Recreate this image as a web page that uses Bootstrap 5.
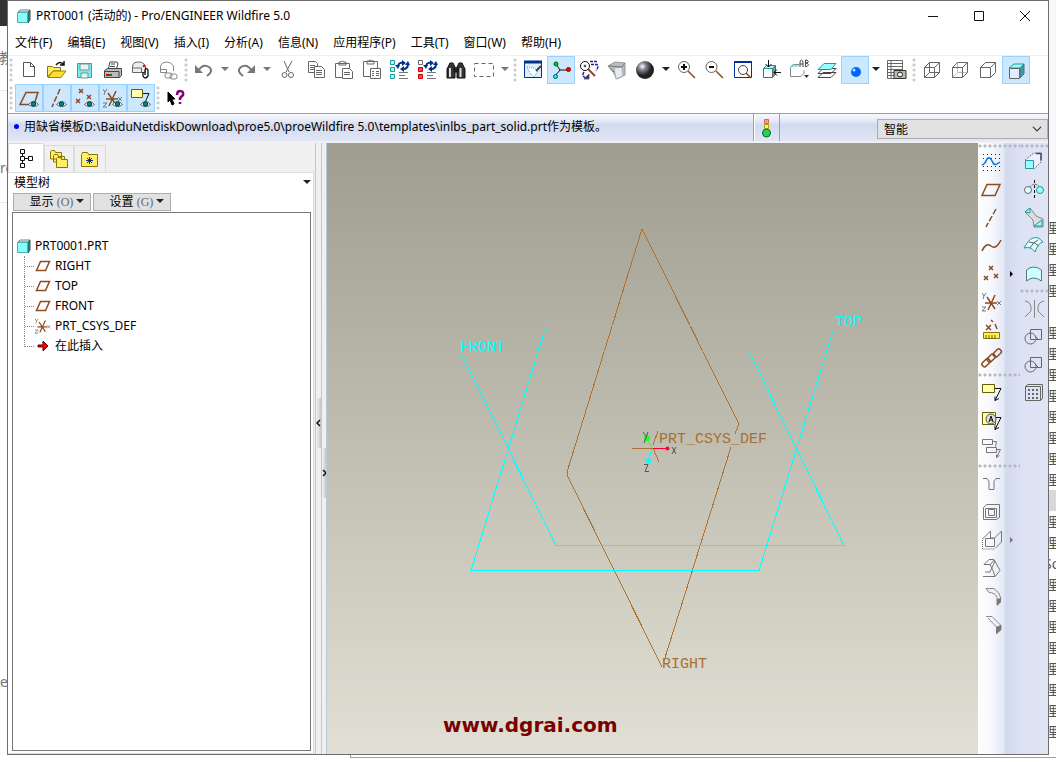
<!DOCTYPE html>
<html lang="zh-CN">
<head>
<meta charset="utf-8">
<meta name="viewport" content="width=device-width, initial-scale=1">
<title>PRT0001 (活动的) - Pro/ENGINEER Wildfire 5.0</title>
<link href="https://cdn.jsdelivr.net/npm/bootstrap@5.3.0/dist/css/bootstrap.min.css" rel="stylesheet">
<style>
body{font:12px/20px "Noto Sans","Noto Sans CJK SC",sans-serif;color:#000;background:#fff}
button{border:0;padding:0;background:none;color:#000}
svg{display:block;overflow:visible;fill:none;stroke:#666}
.edge{width:7px;flex:none;overflow:hidden;font-size:14px;color:#777;background:#fdfdfd}
.edge .cap-dark{height:26px;background:#333}
.edge .sep{border-top:1px solid #e8e8e8}
.edge-r{color:#555;font-size:14px;line-height:21px}
.edge-r .rows div{height:21px;text-indent:-5px;white-space:nowrap}
.under{height:7px;padding-left:350px}
.under div{height:3px;border:1px solid #a0a0a0;border-width:0 0 1px 1px}
.app{border:1px solid #6d6d6d;background:#fff;min-width:0}
.titlebar{height:29px;padding-left:8px}
.titlebar .win{width:46px;height:28px}
.menubar{height:26px;border-bottom:1px solid #f0f0f0}
.menubar a{color:#000;text-decoration:none;padding:0 8px 0 7px;white-space:nowrap}
.tbar{height:28px}
.grip{width:7px;flex:none;margin:2px 0;background:radial-gradient(circle at 3px 2px,#ccc 1px,transparent 2px) 0 0/7px 5px repeat-y}
.tool{width:28px;height:28px;flex:none;display:flex;align-items:center;justify-content:center}
.tool svg{width:20px;height:20px}
.tool.on{background:#cce8ff;border:1px solid #99d1ff}
.drop{width:14px;flex:none}
.drop::after,.tri::after{content:"";display:inline-block;border:4px solid transparent;border-top-color:#222;border-bottom:0;vertical-align:3px}
.drop.off::after{border-top-color:#777}
.msg{height:28px;border-top:1px solid #a09f97;margin-top:1px;background:linear-gradient(#f7f8fd,#e6eaf6 25%,#d2daee 40%,#e2e6f6);flex:none}
.msg .line{padding:0 0 2px 6px}
.msg .lamp{width:27px;border:1px solid #a0a0a0;border-width:0 1px;box-shadow:inset 1px 0 #fff}
.dot{width:5px;height:5px;border-radius:50%;background:#00f;margin-right:5px}
.form-select.filter{width:171px;height:20px;margin:5px 0 0 97px;padding:0 6px;border:1px solid #adadad;border-radius:0;background-color:#e1e1e1;font-size:12px;line-height:17px;color:#000;background-size:10px 10px;background-position:right 5px center}
.main{background:#f0f0f0;padding-top:2px}
.side{width:307px;flex:none;padding-right:1px}
.tabs{height:29px;align-items:flex-end}
.tabs button{height:27px;border:1px solid #dcdcdc;border-bottom:0;display:flex;align-items:center;justify-content:center}
.tabs button:first-child{width:36px;height:30px;background:#fff;margin-bottom:-1px}
.tabs svg{width:20px;height:20px}
.pane{background:#fff;border:1px solid #dcdcdc;border-left:0;padding:0 2px 2px 4px}
.pane .btn-set{height:18px;width:78px;border:1px solid #adadad;background:#e1e1e1;line-height:16px;padding-left:10px}
.pane .cap{padding-left:2px}
.pane .set-row{gap:2px;padding-left:1px}
.btn-set span{font-family:"Liberation Serif",serif;color:#667}
.tree{border:1px solid #777;padding:23px 0 0 4px;margin-top:1px}
.tree ul{list-style:none;margin:0;padding-left:7px}
.tree li{display:flex;align-items:center;height:20px}
.tree ul li::before{content:"";width:11px;height:20px;border-left:1px dotted #888;background:repeating-linear-gradient(90deg,#888 0 1px,transparent 1px 2px) 0 10px/12px 1px no-repeat}
.tree ul li:last-child::before{height:11px;align-self:flex-start}
.tree li svg{width:16px;height:16px;margin-right:4px}
.split{width:6px;border-left:1px solid #b9c9d8;flex:none}
.split.slim{width:5px}
.split button{height:50px;background:linear-gradient(90deg,#f4f4f4,#c8c8c8);font-size:0}
.split svg{width:5px;height:8px}
.view{background:linear-gradient(#9f9d90,#e2e0d4);min-width:0;border-left:1px solid #b9c9d8}
.view svg{width:100%;height:100%;stroke-width:1}
.view .geo{shape-rendering:crispEdges}
.view text{stroke:none;font:15px "Liberation Mono",monospace}
.view .site{font:bold 20px "DejaVu Sans",sans-serif;fill:#7a0000}
.feat{width:70px;flex:none;background:linear-gradient(90deg,#fff,#f5f7fc 20%,#e5e9f6 36%,#d1d9ec 40%,#dce2f3 60%,#e0e5f5)}
.hgrip{height:7px;background:radial-gradient(circle at 2px 3px,#b8b8c0 1px,transparent 2px) 0 0/5px 7px repeat-x}
.hgrip.top{height:5px}
.fly{position:relative}
.fly::after{content:"";position:absolute;left:32px;border:3px solid transparent;border-left-color:#000;border-right:0}
.fly.off::after{border-left-color:#777}
.k{stroke:#111}.b{stroke:#8a4b20;stroke-width:1.500}.t{stroke:#299;fill:#9ff}.y{stroke:#666000;fill:#ffffb0}.yf{stroke:#887700;fill:#fe6}.n{stroke:#039}.f{fill:#777;stroke:none}.e{stroke:#444;fill:#fff}.w{fill:#fff}
</style>
<script src="https://cdn.jsdelivr.net/npm/bootstrap@5.3.0/dist/js/bootstrap.bundle.min.js"></script>
</head>
<body class="vh-100 d-flex flex-column overflow-hidden">
<svg width="0" height="0" class="position-absolute" aria-hidden="true">
<symbol id="eye" viewBox="0 0 20 20"><path class="e" d="M9.500 16.500q5-6 10 0q-5 4-10 0z" stroke-width=".8"/><circle cx="14.500" cy="16" r="2.200" fill="#088" stroke="#044"/></symbol>
<symbol id="plane" viewBox="0 0 16 16"><path d="M5.500 3.500h9l-4 9h-9z" stroke="#8a4b20" stroke-width="1.500"/></symbol>
<symbol id="csys" viewBox="0 0 20 20"><path d="M3 11h12M5 5l8 12M13 3L6 18" stroke="#8a4b20" stroke-width="1.500"/><path d="M0 1l2 3 2-3M2 4l-1 3M15 9l4 4m0-4l-4 4M0 15h4l-4 4h4" stroke="#777"/></symbol>
<symbol id="cube" viewBox="0 0 16 16"><path d="M2 4l2-2h10l-2 2z" fill="#dff" stroke="#688"/><path d="M12 4l2-2v10l-2 3z" fill="#299" stroke="#355"/><path d="M1.500 4.500h10v10h-10z" fill="#8ff" stroke="#5aa"/></symbol>
<symbol id="swap" viewBox="0 0 20 20"><path d="M8 6q1-4 5-3M18 4q0 5-5 5" stroke="#038" stroke-width="2"/><path d="M12 0l4 3-4 3zM14 6l-4 3 4 3zM5 5h5L8 9zM15 5h5l-2-4z" fill="#038" stroke="none"/><path d="M9 12.500h9M9 15.500h6M9 18.500h9" stroke="#777"/></symbol>
<symbol id="circs" viewBox="0 0 20 20"><path d="M6.500 2.500h11v10h-11z"/><circle cx="6.500" cy="11.500" r="5.500"/><path d="M11 9l3 3"/></symbol>
</svg>
<div class="d-flex flex-grow-1 overflow-hidden">
<div class="edge"><div class="cap-dark"></div><div style="height:64px;padding-top:22px;text-indent:-1px">教</div><div class="sep"></div><div style="height:67px"></div><div>rc</div><div class="sep mt-4"></div><div style="height:469px"></div><div>e</div></div>

<div class="app d-flex flex-column flex-grow-1">
<header class="titlebar d-flex align-items-center flex-shrink-0">
<svg width="16" height="16"><use href="#cube"/></svg><span class="ms-1 flex-grow-1">PRT0001 (活动的) - Pro/ENGINEER Wildfire 5.0</span>
<button class="win" aria-label="最小化"><svg width="46" height="28" class="k"><path d="M18 14.500h10"/></svg></button>
<button class="win" aria-label="最大化"><svg width="46" height="28" class="k"><path d="M18.500 9.500h9v9h-9z"/></svg></button>
<button class="win" aria-label="关闭"><svg width="46" height="28" class="k"><path d="M18 9l10 10M28 9L18 19"/></svg></button>
</header>
<nav class="menubar d-flex align-items-center flex-shrink-0"><a href="#">文件(F)</a><a href="#">编辑(E)</a><a href="#">视图(V)</a><a href="#">插入(I)</a><a href="#">分析(A)</a><a href="#">信息(N)</a><a href="#">应用程序(P)</a><a href="#">工具(T)</a><a href="#">窗口(W)</a><a href="#">帮助(H)</a></nav>

<div class="tbar d-flex flex-shrink-0">
<span class="grip"></span>
<button class="tool" aria-label="新建"><svg viewBox="0 0 20 20"><path d="M4.500 2.500h7l4 4v10h-11zM11.500 2.500v4h4" stroke="#555"/></svg></button>
<button class="tool" aria-label="打开"><svg viewBox="0 0 20 20"><path class="yf" d="M.5 17V6.500h5l1 1h7V11H6z"/><path d="M1 17.500l5-6.500h13l-5 6.500z" fill="#fd3" stroke="#880"/><path class="k" d="M9 5q4-5 8 0M17 1v4h-4" stroke-width="1.500"/></svg></button>
<button class="tool" aria-label="保存"><svg viewBox="0 0 20 20"><path d="M2.500 3.500h14v14h-14z" fill="#7ee" stroke="#499"/><path d="M5 4h9v6H5zM6 13h7v5H6z" fill="#eee" stroke="#699"/></svg></button>
<button class="tool" aria-label="打印"><svg viewBox="0 0 20 20"><path class="e" d="M5 10l2-8h7l1 2-2 6z"/><path d="M8 4h4M7 6.500h5" stroke="#444"/><path d="M1.500 10.500l3-2h14v7l-2 2h-15z" fill="#bbb" stroke="#444"/><path d="M2 11.500h14v6" stroke="#444"/><path d="M3 15h3" stroke="#d00" stroke-width="2"/><path d="M6 15h3" stroke="#080" stroke-width="2"/></svg></button>
<button class="tool" aria-label="发送"><svg viewBox="0 0 20 20"><path d="M1.500 12.500V7q0-5 6-5t7 5v5.500zM1.500 8h9v4" fill="#eee"/><circle cx="13" cy="6" r="1" fill="red" stroke="red"/><path class="k" d="M12 12v4q2 4 5 0v-6q-2-3-3 0v5" stroke-width="1.300"/></svg></button>
<button class="tool" aria-label="链接"><svg viewBox="0 0 20 20"><path d="M1.500 12.500V6q1-4 6-4t7 4v5M1.500 9.500h6V13M1.500 12.500h6" stroke="#888"/><rect x="6" y="13" width="7" height="5" rx="2" stroke="#888"/><rect x="11" y="14" width="7" height="5" rx="2" stroke="#888"/></svg></button>
<span class="grip"></span>
<button class="tool" aria-label="撤消"><svg viewBox="0 0 20 20"><path d="M4 11q5-8 11-4 5 4-2 9" stroke="#777" stroke-width="2"/><path class="f" d="M1 5v8h8z"/></svg></button><button class="drop off" aria-label="撤消列表"></button>
<button class="tool" aria-label="重做"><svg viewBox="0 0 20 20"><path d="M16 11Q11 3 5 7q-5 4 2 9" stroke="#777" stroke-width="2"/><path class="f" d="M19 5v8h-8z"/></svg></button><button class="drop off" aria-label="重做列表"></button>
<button class="tool" aria-label="剪切"><svg viewBox="0 0 20 20"><path d="M6 1l5 11M14 1L8 12"/><circle cx="6.500" cy="15" r="2.500"/><circle cx="13" cy="15" r="2.500"/></svg></button>
<button class="tool" aria-label="复制"><svg viewBox="0 0 20 20" stroke="#777"><path class="w" d="M2.500 1.500h7l2 2v9h-9zM4 5.500h5m-5 2h5m-5 2h5"/><path class="w" d="M8.500 6.500h7l3 3v8h-10zM10 10.500h6m-6 2h6m-6 2h6"/></svg></button>
<button class="tool" aria-label="粘贴"><svg viewBox="0 0 20 20"><path d="M1.500 3.500h14v14h-14zM5 5V2h2q1-2 3 0h2v3z"/><path class="w" d="M8.500 8.500h7l3 3v7h-10zM10 12.500h6m-6 2h6"/></svg></button>
<button class="tool" aria-label="选择性粘贴"><svg viewBox="0 0 20 20"><path d="M1.500 1.500h14v15h-14zM5 4V1h2q1-2 3 0h2v3z"/><path class="w" d="M8.500 8.500h10v10h-10zM10 11.500h2m2 0h3m-7 2h2m2 0h3m-7 2h2m2 0h3"/></svg></button>
<button class="tool" aria-label="再生"><svg viewBox="0 0 20 20"><path class="t" d="M.5.5h4v4h-4zM.5 7.500h4v4h-4zM.5 14.500h4v4h-4z"/><use href="#swap"/></svg></button>
<button class="tool" aria-label="再生管理器"><svg viewBox="0 0 20 20"><path d="M.5.5h4v4h-4z"/><path d="M.5 7.500h4v4h-4zM.5 14.500h4v4h-4z" fill="#f44" stroke="#c00"/><use href="#swap"/></svg></button>
<button class="tool" aria-label="查找"><svg viewBox="0 0 20 20"><path d="M4 3h3l2 4v11H1V9zM13 3h3l3 6v9h-8V7zM8 8h4v4H8z" fill="#333" stroke="#111"/><path d="M4 8v9M14.500 8v9" stroke="#ddd" stroke-width="2"/></svg></button>
<button class="tool" aria-label="选取框"><svg viewBox="0 0 20 20"><path d="M.5 3.500h19v13H.5z" stroke-dasharray="4 3"/></svg></button><button class="drop off" aria-label="选取列表"></button>
<span class="grip"></span>
<button class="tool" aria-label="重画"><svg viewBox="0 0 20 20"><path d="M1.500 1.500h17v16h-17z" fill="#def" stroke="#038"/><path d="M1 2h18" stroke="#038" stroke-width="3"/><path d="M4 7l7 1 4 3-4 6-4-4z" fill="#fff" stroke="#3ad" stroke-dasharray="1 1"/><path d="M18 6l-5 5" stroke="#444" stroke-width="2"/></svg></button>
<button class="tool on" aria-label="旋转中心"><svg viewBox="0 0 20 20"><path class="k" d="M5 4l4 6h8M9 10l-5 6"/><circle cx="5" cy="4" r="2" fill="#0c3" stroke="#060"/><circle cx="17.500" cy="9.500" r="2" fill="red" stroke="#800"/><circle cx="4.500" cy="16.500" r="2" fill="#3ee" stroke="#055"/></svg></button>
<button class="tool" aria-label="定向模式"><svg viewBox="0 0 20 20"><circle class="k" cx="6" cy="6" r="4.500"/><circle cx="6" cy="6" r="1" fill="#000"/><path d="M9 9l7 7" stroke="#8a4b20" stroke-width="2"/><path d="M11 1.500h7M12 4.500h6q2 3-1 6M5 12q-3 4 2 6" stroke="#229" stroke-dasharray="3 1" stroke-width="1.500"/><path d="M5 19h5v-5z" fill="#229"/></svg></button>
<button class="tool" aria-label="外观"><svg viewBox="0 0 20 20"><path d="M1 6l7-4 10 1v12l-8 4-4-7z" fill="#bbb" stroke="#999"/><path d="M7 8l8-1 1 9-7 3z" fill="#e4eaf4" stroke="#aaa"/><path d="M1 6l14 1 3-4M3 8l4 4" stroke="#777"/></svg></button>
<button class="tool" aria-label="外观库"><svg viewBox="0 0 20 20"><defs><radialGradient id="ball" cx=".35" cy=".3"><stop stop-color="#fff"/><stop offset=".4" stop-color="#889"/><stop offset="1" stop-color="#222"/></radialGradient></defs><circle cx="10" cy="10" r="9" fill="url(#ball)" stroke="none"/></svg></button><button class="drop" aria-label="外观列表"></button>
<button class="tool" aria-label="放大"><svg viewBox="0 0 20 20"><circle cx="7" cy="7" r="5.500"/><path class="k" d="M4 7h6M7 4v6" stroke-width="2"/><path class="b" d="M11 11l7 7" stroke-width="2"/></svg></button>
<button class="tool" aria-label="缩小"><svg viewBox="0 0 20 20"><circle cx="6.500" cy="7" r="5.500"/><path class="k" d="M4 7h5" stroke-width="2"/><path class="b" d="M11 11l7 7"/></svg></button>
<button class="tool" aria-label="重新调整"><svg viewBox="0 0 20 20"><path class="n" d="M1.500 1.500h17v16h-17z"/><path class="n" d="M1 2h18" stroke-width="2"/><circle cx="10" cy="10" r="4.500" stroke="#444"/><path class="b" d="M13 13l5 5"/></svg></button>
<button class="tool" aria-label="重定向"><svg viewBox="0 0 20 20"><path d="M2.500 8.500h9v9h-9z" fill="#f4ffff"/><path class="t" d="M2.500 8.500l3-3h9l-3 3z"/><path d="M11.500 8.500l3-3v9l-3 3z" fill="#4aa"/><path class="k" d="M7.500 0v7m-3-3l3 3 3-3M20 12.500h-7m3-3l-3 3 3 3"/></svg></button>
<button class="tool" aria-label="视图列表"><svg viewBox="0 0 20 20"><path d="M1 7l3-3h7l-2 3z" fill="#8ee" stroke="none"/><path d="M1.500 16.500v-9l3-3H10M1.500 16.500H12l3-3v-3" stroke="#888"/><path d="M11 7V2q1.500-4 3 0v5m-3-3h3M16.500 6.500V0H18q3 2 0 3h-1.500H18q3 2 0 3.500z" stroke="#444"/><path d="M15 15h5l-2.500 3z" fill="#333" stroke="none"/></svg></button>
<button class="tool" aria-label="图层"><svg viewBox="0 0 20 20"><path class="e" d="M1 17.500l5-5h13l-5 5zM1 13.500l5-5h13l-5 5z"/><path class="t" d="M1 9.500l6-6h12l-5 6z" stroke="#444"/></svg></button>
<button class="tool on" aria-label="视图管理器"><svg viewBox="0 0 20 20"><circle cx="11" cy="12" r="5" fill="#06f" stroke="none"/><circle cx="9" cy="10" r="1.500" fill="#bdf" stroke="none"/></svg></button><button class="drop" aria-label="显示列表"></button>
<button class="tool" aria-label="快照"><svg viewBox="0 0 20 20"><path d="M.5.5h15v18H.5zM.5 3.500h15m-15 3h15m-15 3h15m-15 3h15m-15 3h15M4 1v18"/><path d="M7 10.500h12v8H7z" fill="#bba" stroke="#333"/><circle cx="13" cy="14.500" r="2.500" fill="#eee" stroke="#222"/></svg></button>
<span class="grip"></span>
<button class="tool" aria-label="线框"><svg viewBox="0 0 20 20"><path d="M2.500 7.500l5-5h10v10l-5 5h-10zM2.500 7.500h10v10m0-10l5-5M7.500 2.500v10h10m-10 0l-5 5"/></svg></button>
<button class="tool" aria-label="隐藏线"><svg viewBox="0 0 20 20"><path d="M7.500 2.500v10h10m-10 0l-5 5" stroke="#bbb"/><path d="M2.500 7.500l5-5h10v10l-5 5h-10zM2.500 7.500h10v10m0-10l5-5"/></svg></button>
<button class="tool" aria-label="无隐藏线"><svg viewBox="0 0 20 20"><path d="M2.500 7.500l5-5h10v10l-5 5h-10zM2.500 7.500h10v10m0-10l5-5"/></svg></button>
<button class="tool on" aria-label="着色"><svg viewBox="0 0 20 20"><path class="t" d="M3 8l5-4h10l-4 4z"/><path d="M14 8l4-4v10l-4 4z" fill="#3a9fa6"/><path d="M3.500 8.500h10v10h-10z" fill="#def"/></svg></button>
</div>
<div class="tbar d-flex flex-shrink-0">
<span class="grip"></span>
<button class="tool on" aria-label="基准平面显示"><svg viewBox="0 0 20 20"><path class="b" d="M7 4.500h12l-4 12H1z"/><use href="#eye"/></svg></button>
<button class="tool on" aria-label="基准轴显示"><svg viewBox="0 0 20 20"><path class="b" d="M13 1L5 19" stroke-dasharray="6 2"/><use href="#eye"/></svg></button>
<button class="tool on" aria-label="基准点显示"><svg viewBox="0 0 20 20"><path class="b" d="M4 1l4 4m0-4L4 5M12 7l4 4m0-4l-4 4M1 11l4 4m0-4l-4 4"/><use href="#eye"/></svg></button>
<button class="tool on" aria-label="坐标系显示"><svg viewBox="0 0 20 20"><use href="#csys"/><use href="#eye"/></svg></button>
<button class="tool on" aria-label="注释显示"><svg viewBox="0 0 20 20"><path class="y" d="M.5 1.500h11v8H.5z"/><path class="k" d="M12 5.500h6l-4 9"/><use href="#eye"/></svg></button>
<span class="grip"></span>
<button class="tool" aria-label="上下文帮助"><svg viewBox="0 0 20 20"><path d="M2 4v10l2-2 2 5 2-1-2-5h3z" fill="#000" stroke="#000"/><path d="M11 7q0-4 3-4 4 0 3 4l-3 3v2m0 2v2" stroke="#807" stroke-width="2.500"/></svg></button>
</div>

<div class="msg d-flex">
<div class="line d-flex flex-grow-1 align-items-center text-nowrap"><span class="dot"></span><span>用缺省模板D:\BaiduNetdiskDownload\proe5.0\proeWildfire 5.0\templates\inlbs_part_solid.prt作为模板。</span></div>
<div class="lamp d-flex align-items-center justify-content-center"><svg width="10" height="20"><path d="M2.500 1.500h4v4h-4z" fill="#f99" stroke="#c66"/><path d="M2.500 6.500h4v4h-4z" fill="#fe8" stroke="#aa0"/><circle cx="4.500" cy="15" r="4" fill="#3c5" stroke="#063"/></svg></div>
<select class="form-select filter" aria-label="选取过滤器"><option>智能</option></select>
</div>

<div class="main d-flex flex-grow-1 overflow-hidden">
<aside class="side d-flex flex-column">
<div class="tabs d-flex flex-shrink-0">
<button aria-label="模型树"><svg viewBox="0 0 20 20" class="k"><path d="M4.500.5h4v4h-4zM4.500 7.500h4v4h-4zM4.500 14.500h4v4h-4zM12.500 7.500h4v4h-4zM6.500 4.500v3m0 4v3m2-5h4"/></svg></button>
<button style="width:30px" aria-label="文件夹浏览器"><svg viewBox="0 0 20 20"><path class="yf" d="M1.500 10V2.500l1-1h3l1 2h6V10zM4.500 13V6.500l1-1h3l1 2h6V13z"/><path class="yf" d="M7.500 18.500v-9l1-1h3l1 2h6v8z"/></svg></button>
<button style="width:32px" aria-label="收藏夹"><svg viewBox="0 0 20 20"><path class="yf" d="M1.500 17.500v-12l1-2h5l1 2h9v12z"/><path class="n" d="M9.500 8v7M6 11.500h7M7 9l5 5m0-5l-5 5"/></svg></button>
</div>
<div class="pane flex-grow-1 d-flex flex-column">
<div class="d-flex"><span class="cap flex-grow-1">模型树</span><button class="tri lh-1" aria-label="面板菜单"></button></div>
<div class="set-row d-flex"><button class="btn-set tri">显示 <span>(O)</span> </button><button class="btn-set tri">设置 <span>(G)</span> </button></div>
<div class="tree flex-grow-1">
<div class="d-flex align-items-center"><svg width="14" height="14" viewBox="1 1 14 14" class="me-1"><use href="#cube" width="16" height="16"/></svg>PRT0001.PRT</div>
<ul><li><svg><use href="#plane"/></svg>RIGHT</li><li><svg><use href="#plane"/></svg>TOP</li><li><svg><use href="#plane"/></svg>FRONT</li><li><svg><use href="#csys"/></svg>PRT_CSYS_DEF</li><li><svg viewBox="0 0 16 16"><path d="M3 7h5V3l5 5-5 5V9H3z" fill="red" stroke="#600"/></svg>在此插入</li></ul>
</div></div>
</aside>
<div class="split d-flex flex-column"><span style="flex:255"></span><button aria-label="收起导航器"><svg class="k" viewBox="0 0 5 8"><path d="M4 1L1 4l3 3" stroke-width="1.500"/></svg></button><span style="flex:306"></span></div>
<div class="split slim d-flex flex-column"><span style="flex:305"></span><button aria-label="展开浏览器"><svg class="k" viewBox="0 0 5 8"><path d="M1 1l3 3-3 3" stroke-width="1.500"/></svg></button><span style="flex:256"></span></div>
<main class="view flex-grow-1">
<svg viewBox="327 143 651 611" role="img" aria-label="基准平面">
<g class="geo"><g stroke="#b07030"><path d="M662 667L567 475v-3L642 229l96 193v4l-3 8M731 447l-67 214M632 448.500h28M653 448l6 14M653 445l5-14"/></g>
<path stroke="#0ff" d="M834 325.500H546L471 570.500h288l75-243M505 351.500h244l95 194H556L462 355"/>
<path stroke="#f03" d="M653 448.500h14"/><path stroke="#3f3" d="M652 447l-5-9"/><path stroke="#0ff" d="M652 449l-4 12"/></g>
<circle cx="647" cy="438" r="3" fill="#2f2" stroke="none"/><circle cx="667.500" cy="448.500" r="2" fill="#f03" stroke="none"/><circle cx="648.500" cy="461" r="2.500" fill="#0ff" stroke="none"/>
<g stroke="#555"><path d="M643 432l3 4m2-4l-4 11M672 447l4 7m0-7l-4 7M644 464.500h4l-3 7h4"/></g>
<g fill="#0ff"><text x="460" y="351">FRONT</text><text x="835" y="326">TOP</text></g>
<g fill="#a87030"><text x="659" y="443">PRT_CSYS_DEF</text><text x="662" y="668">RIGHT</text></g>
<text class="site" x="443" y="732">www.dgrai.com</text>
</svg>
</main>
<aside class="feat d-flex">
<div class="flex-grow-1"><div class="hgrip top"></div>
<button class="tool" aria-label="草绘"><svg viewBox="0 0 20 20"><path d="M1 2.500h17M1 6.500h17M1 14.500h17M1 18.500h17" stroke="#226" stroke-dasharray="1 3"/><path d="M0 13q3-1 5-6 3-3 5 2t5 3l3-2" stroke="#07d" stroke-width="1.500"/></svg></button>
<button class="tool" aria-label="平面"><svg viewBox="0 0 20 20"><path class="b" d="M5 4.500h13l-5 11H0z"/></svg></button>
<button class="tool" aria-label="轴"><svg viewBox="0 0 20 20"><path class="b" d="M14 1L4 19" stroke-dasharray="6 2"/></svg></button>
<button class="tool" aria-label="曲线"><svg viewBox="0 0 20 20"><path class="b" d="M0 15q4-9 9-5t10-6"/></svg></button>
<button class="tool fly" aria-label="点"><svg viewBox="0 0 20 20"><path class="b" d="M7 2l4 4m0-4L7 6M12 10l4 4m0-4l-4 4M2 12l4 4m0-4l-4 4"/></svg></button>
<button class="tool" aria-label="坐标系"><svg viewBox="0 0 20 20"><use href="#csys"/></svg></button>
<button class="tool" aria-label="分析"><svg viewBox="0 0 20 20"><path class="b" d="M4 5l5 5m0-5l-5 5M9 0l2 2M13 4l2 5"/><path class="yf" d="M1.500 12.500h16v6h-16z"/><path d="M4 15v4m3-4v4m3-4v4m3-4v4" stroke="#660"/></svg></button>
<button class="tool" aria-label="参照"><svg viewBox="0 0 20 20"><g stroke="#8a4b20" stroke-width="1.500"><rect x="-1" y="12" width="9" height="5" rx="2" transform="rotate(-45 4 14)"/><rect x="5" y="7" width="9" height="5" rx="2" transform="rotate(-45 10 10)"/><rect x="11" y="2" width="9" height="5" rx="2" transform="rotate(-45 16 5)"/></g></svg></button>
<div class="hgrip"></div>
<button class="tool" aria-label="注释"><svg viewBox="0 0 20 20"><path class="y" d="M.5 1.500h12v8H.5z"/><path class="k" d="M13 5.500h6l-6 12m0-4v4l4-2"/></svg></button>
<button class="tool" aria-label="传播注释"><svg viewBox="0 0 20 20"><path class="y" d="M.5 1.500h13v12H.5z"/><circle cx="9" cy="8" r="5" fill="#ddd" stroke="#555"/><path class="k" d="M7 11l2-6 2 6m-3-2h3M14 6.500h5l-6 12m0-4v4l4-2"/></svg></button>
<button class="tool" aria-label="注释元素"><svg viewBox="0 0 20 20"><path d="M.5.5h10v5H.5zM10.500 2.500h4l-1 5M4.500 8.500h10v5h-10zM14.500 10.500h4l-4 8m0-3v3l3-2" stroke="#777"/></svg></button>
<div class="hgrip"></div>
<button class="tool" aria-label="孔"><svg viewBox="0 0 20 20"><path d="M1 4.500h4l2 3v8h5v-8l2-3h4" stroke="#777"/></svg></button>
<button class="tool" aria-label="壳"><svg viewBox="0 0 20 20"><path d="M1.500 5.500l3-3h13v13l-3 2h-13zM3.500 6.500h11v9h-11zM6.500 7.500h6v6h-6z" stroke="#777"/></svg></button>
<button class="tool fly off" aria-label="筋"><svg viewBox="0 0 20 20"><path d="M.5 9L8.500 1v7h4l7-7v11l-6 6M3.500 8.500h9v8h-9z" stroke="#777"/><path d="M.5 10v9h12" stroke-dasharray="1 1"/></svg></button>
<button class="tool" aria-label="拔模"><svg viewBox="0 0 20 20"><path d="M1 18.500h12l5-6-6-11H7l-5 5h6l3 6 2 6M3 14h5l5-11M8 7l4-5" stroke="#777"/></svg></button>
<button class="tool" aria-label="倒圆角"><svg viewBox="0 0 20 20"><path d="M4 2.500h8q6 4 7 10l-4 6v-7q-2-5-8-5z" fill="#eee" stroke="#888"/><path class="f" d="M15 13l4-1v4l-4 4z"/></svg></button>
<button class="tool" aria-label="倒角"><svg viewBox="0 0 20 20"><path d="M4 2.500h6l9 9v4l-4 4v-6L6 4" stroke="#888"/><path class="f" d="M14 13l5-2v5l-5 4z"/></svg></button>
</div>
<div><div class="hgrip top"></div>
<button class="tool" aria-label="拉伸"><svg viewBox="0 0 20 20"><path d="M1 8l9-7h7v9l-7 7" fill="#eef" stroke="#777" stroke-dasharray="2 1"/><path d="M12 1.500h5v7" stroke="#355" stroke-width="1.500"/><path class="t" d="M1.500 8.500h8v8h-8z"/></svg></button>
<button class="tool" aria-label="旋转"><svg viewBox="0 0 20 20"><path class="k" d="M10.500 0v20" stroke-dasharray="3 2"/><circle cx="4" cy="10" r="3.500" fill="#dff"/><circle class="t" cx="16" cy="10" r="3.500"/><path d="M6 7q4-5 9-1" stroke-dasharray="2 1"/></svg></button>
<button class="tool" aria-label="可变截面扫描"><svg viewBox="0 0 20 20"><path d="M1 4l5-4 6 8 7 3v8h-9l-1-7z" fill="#ddd" stroke="#888"/><path class="t" d="M1 4l5-4v5z"/><path class="t" d="M10 18l8-6v6z"/></svg></button>
<button class="tool" aria-label="边界混合"><svg viewBox="0 0 20 20"><path class="t" d="M0 12q5-9 9-10 5-2 10 4-5 1-8 10-4-6-11-4z" style="fill:#dff"/><path d="M5 6q6 0 10 4M6 12q3-6 8-8"/></svg></button>
<button class="tool" aria-label="造型"><svg viewBox="0 0 20 20"><path d="M2.500 6q7-6 15 0v11q-8-6-15 0z" fill="#cff" stroke="#577"/></svg></button>
<div class="hgrip"></div>
<button class="tool" aria-label="镜像"><svg viewBox="0 0 20 20"><path d="M10.500 1v18M1 2q7 1 6 10l-6 6M20 2q-7 1-6 10l6 6" stroke="#888"/></svg></button>
<button class="tool" aria-label="合并"><svg viewBox="0 0 20 20"><use href="#circs"/></svg></button>
<button class="tool" aria-label="修剪"><svg viewBox="0 0 20 20"><use href="#circs"/></svg></button>
<button class="tool" aria-label="阵列"><svg viewBox="0 0 20 20"><path d="M1.500 3.500l2-2h15v14l-2 2h-15zM1.500 3.500h15v14"/><path d="M4 7h10M4 11h10M4 15h10" stroke-width="2" stroke-dasharray="2 2"/></svg></button>
</div>
</aside>
</div>
</div>

<div class="edge edge-r"><div style="height:217px;background:#f7f7f9"></div><div class="rows"><div>理</div><div>理</div><div>理</div><div>理</div><div></div><div>理</div><div>理</div><div>理</div><div>理</div><div>理</div><div>理</div><div>理</div><div>理</div><div style="background:#d8d8d8"></div><div>理</div><div>理</div><div>So</div><div>理</div><div>理</div><div>理</div><div>理</div><div>理</div><div>理</div><div>理</div><div>理</div></div></div>
</div>
<div class="under"><div></div></div>
</body>
</html>
